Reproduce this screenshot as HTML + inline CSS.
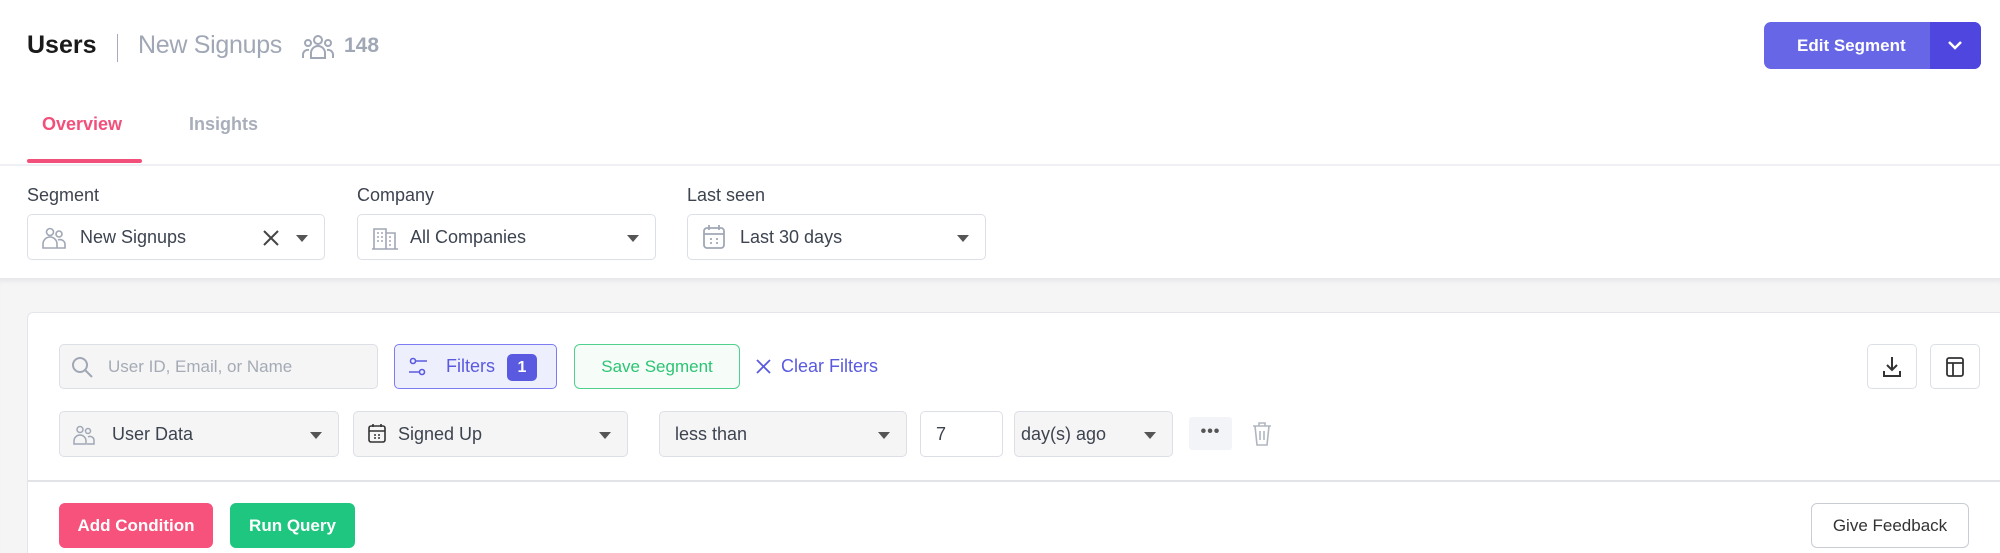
<!DOCTYPE html>
<html><head><meta charset="utf-8"><style>
*{box-sizing:border-box;margin:0;padding:0}
html,body{width:2000px;height:553px;overflow:hidden}
body{background:#fff;font-family:"Liberation Sans",sans-serif;color:#333;position:relative}
.a{position:absolute}
.dd{position:absolute;border:1px solid #dcdfe6;border-radius:5px;background:#fff;height:46px;display:flex;align-items:center;font-size:18px;color:#3d4450}
.gray{background:#f5f5f6}
.caret{position:absolute;right:16px;top:20px;width:0;height:0;border-left:6px solid transparent;border-right:6px solid transparent;border-top:7px solid #555}
.btn{position:absolute;border-radius:6px;display:flex;align-items:center;justify-content:center;font-size:17px;font-weight:bold}
</style></head><body>
<div class="a" style="left:27px;top:31px;font-size:25px;font-weight:bold;color:#1a1a1a">Users</div>
<div class="a" style="left:117px;top:34px;width:1px;height:28px;background:#aab"></div>
<div class="a" style="left:138px;top:31px;font-size:25px;color:#a0a7b5;letter-spacing:-0.3px">New Signups</div>
<svg class="a" style="left:302px;top:34px" width="32" height="26" viewBox="0 0 32 26" fill="none" stroke="#a0a7b5" stroke-width="2"><circle cx="16" cy="6" r="4"/><circle cx="6" cy="9" r="3"/><circle cx="26" cy="9" r="3"/><path d="M9 24v-5a7 7 0 0114 0v5zM1 24v-4a5 5 0 016-4M31 24v-4a5 5 0 00-6-4"/></svg>
<div class="a" style="left:344px;top:34px;font-size:21px;font-weight:bold;color:#a0a7b5">148</div>
<div class="btn" style="left:1764px;top:22px;width:217px;height:47px;background:#6666e6;color:#fff;justify-content:flex-start;padding-left:33px;border-radius:7px">Edit Segment</div>
<div class="a" style="left:1930px;top:22px;width:51px;height:47px;background:#4f46e0;border-radius:0 7px 7px 0"></div>
<svg class="a" style="left:1947px;top:39px" width="16" height="12" viewBox="0 0 16 12"><path d="M2 3l6 6 6-6" stroke="#fff" stroke-width="2.5" fill="none"/></svg>
<div class="a" style="left:42px;top:114px;font-size:18px;font-weight:bold;color:#f2507b">Overview</div>
<div class="a" style="left:189px;top:114px;font-size:18px;font-weight:bold;color:#a8aeba">Insights</div>
<div class="a" style="left:27px;top:159px;width:115px;height:4px;background:#f2507b;border-radius:2px"></div>
<div class="a" style="left:0;top:164px;width:2000px;height:2px;background:#eef0f3"></div>
<div class="a" style="left:27px;top:185px;font-size:18px;color:#3d4450">Segment</div>
<div class="a" style="left:357px;top:185px;font-size:18px;color:#3d4450">Company</div>
<div class="a" style="left:687px;top:185px;font-size:18px;color:#3d4450">Last seen</div>
<div class="dd" style="left:27px;top:214px;width:298px;padding-left:52px">New Signups
<svg class="a" style="left:14px;top:12px" width="24" height="22" viewBox="0 0 24 22" fill="none" stroke="#a0a7b5" stroke-width="1.6"><circle cx="8" cy="5" r="3.5"/><circle cx="17" cy="7" r="3"/><path d="M1 21v-4a7 7 0 0114 0v4zM15 21h8v-3a5 5 0 00-7-5"/></svg>
<svg class="a" style="left:235px;top:15px" width="16" height="16" viewBox="0 0 16 16"><path d="M1 1l14 14M15 1L1 15" stroke="#444" stroke-width="2"/></svg>
<div class="caret"></div></div>
<div class="dd" style="left:357px;top:214px;width:299px;padding-left:52px">All Companies
<svg class="a" style="left:14px;top:11px" width="26" height="24" viewBox="0 0 26 24" fill="none" stroke="#a0a7b5" stroke-width="1.6"><path d="M2 23V3h12v20M14 7h9v16M0 23h26"/><path d="M5 7h2M9 7h2M5 11h2M9 11h2M5 15h2M9 15h2M17 11h2M17 15h2M17 19h2"/></svg>
<div class="caret"></div></div>
<div class="dd" style="left:687px;top:214px;width:299px;padding-left:52px">Last 30 days
<svg class="a" style="left:14px;top:9px" width="24" height="26" viewBox="0 0 24 26" fill="none" stroke="#a0a7b5" stroke-width="1.8"><rect x="2" y="4" width="20" height="20" rx="3"/><path d="M2 10h20M7 1v5M17 1v5M8 15h2M14 15h2M8 19h2M14 19h2"/></svg>
<div class="caret"></div></div>
<div class="a" style="left:0;top:278px;width:2000px;height:275px;background:#f5f5f6;box-shadow:inset 0 6px 6px -4px #e2e2e4"></div>
<div class="a" style="left:27px;top:312px;width:1973px;height:241px;background:#fff;border:1px solid #e3e5ea;border-bottom:none;border-right:none;border-radius:6px 0 0 0"></div>
<div class="a" style="left:27px;top:480px;width:1973px;height:2px;background:#e1e3e7"></div>
<div class="dd gray" style="left:59px;top:344px;width:319px;height:45px;padding-left:48px;color:#a5abb5;font-size:17px">User ID, Email, or Name
<svg class="a" style="left:10px;top:10px" width="24" height="24" viewBox="0 0 24 24" fill="none" stroke="#a0a7b5" stroke-width="2"><circle cx="10" cy="10" r="7"/><path d="M15 15l7 7"/></svg></div>
<div class="dd" style="left:394px;top:344px;width:163px;height:45px;background:#eeeffd;border:1.5px solid #7c7cf0;color:#5a5ae0;padding-left:51px">Filters
<svg class="a" style="left:13px;top:12px" width="20" height="20" viewBox="0 0 20 20" fill="none" stroke="#5a5ae0" stroke-width="1.6"><circle cx="5" cy="4" r="2.5"/><path d="M8 4h11M1 15h10"/><circle cx="14" cy="15" r="2.5"/></svg>
<div class="a" style="left:112px;top:9px;width:30px;height:27px;background:#5a5ae0;border-radius:5px;color:#fff;font-weight:bold;font-size:16px;text-align:center;line-height:27px">1</div></div>
<div class="btn" style="left:574px;top:344px;width:166px;height:45px;border:1.5px solid #4fd08c;background:#f6fdf9;color:#2cc473;font-weight:normal">Save Segment</div>
<svg class="a" style="left:756px;top:359px" width="15" height="15" viewBox="0 0 15 15"><path d="M1 1l13 13M14 1L1 14" stroke="#5a5ae0" stroke-width="1.8"/></svg>
<div class="a" style="left:781px;top:356px;font-size:18px;color:#5a5ae0">Clear Filters</div>
<div class="dd" style="left:1867px;top:344px;width:50px;height:45px;justify-content:center"><svg width="20" height="22" viewBox="0 0 20 22" fill="none" stroke="#333" stroke-width="2"><path d="M10 1v13M5 9l5 5 5-5M2 15v5h16v-5"/></svg></div>
<div class="dd" style="left:1930px;top:344px;width:50px;height:45px;justify-content:center"><svg width="18" height="20" viewBox="0 0 18 20" fill="none" stroke="#333" stroke-width="1.8"><rect x="1" y="1" width="16" height="18" rx="2"/><path d="M1 6h16M7 6v13"/></svg></div>
<div class="dd gray" style="left:59px;top:411px;width:280px;padding-left:52px">User Data
<svg class="a" style="left:13px;top:13px" width="22" height="20" viewBox="0 0 22 20" fill="none" stroke="#a0a7b5" stroke-width="1.5"><circle cx="7" cy="4.5" r="3"/><circle cx="15" cy="6" r="2.5"/><path d="M1 19v-3a6 6 0 0112 0v3zM14 19h7v-3a4 4 0 00-6-4"/></svg><div class="caret"></div></div>
<div class="dd gray" style="left:353px;top:411px;width:275px;padding-left:44px">Signed Up
<svg class="a" style="left:14px;top:11px" width="18" height="20" viewBox="0 0 18 20" fill="none" stroke="#333" stroke-width="1.6"><rect x="1" y="3" width="16" height="16" rx="2"/><path d="M1 8h16M5 1v3M13 1v3M6 12h2M10 12h2M6 15h2M10 15h2"/></svg><div class="caret"></div></div>
<div class="dd gray" style="left:659px;top:411px;width:248px;padding-left:15px">less than<div class="caret"></div></div>
<div class="dd" style="left:920px;top:411px;width:83px;padding-left:15px">7</div>
<div class="dd gray" style="left:1014px;top:411px;width:159px;padding-left:6px">day(s) ago<div class="caret"></div></div>
<div class="a" style="left:1189px;top:417px;width:43px;height:33px;background:#f2f4f7;border-radius:3px;text-align:center;font-size:16px;font-weight:bold;color:#555;line-height:30px;letter-spacing:1px">•••</div>
<svg class="a" style="left:1252px;top:421px" width="20" height="26" viewBox="0 0 20 26" fill="none" stroke="#b0b5bf" stroke-width="1.6"><path d="M1 5h18M7 5V2h6v3M3 5l2 19h10l2-19M8 10v9M12 10v9"/></svg>
<div class="btn" style="left:59px;top:503px;width:154px;height:45px;background:#f7527b;color:#fff">Add Condition</div>
<div class="btn" style="left:230px;top:503px;width:125px;height:45px;background:#1fc67f;color:#fff">Run Query</div>
<div class="btn" style="left:1811px;top:503px;width:158px;height:45px;border:1.5px solid #c9ccd3;color:#333;font-weight:normal">Give Feedback</div>
</body></html>
